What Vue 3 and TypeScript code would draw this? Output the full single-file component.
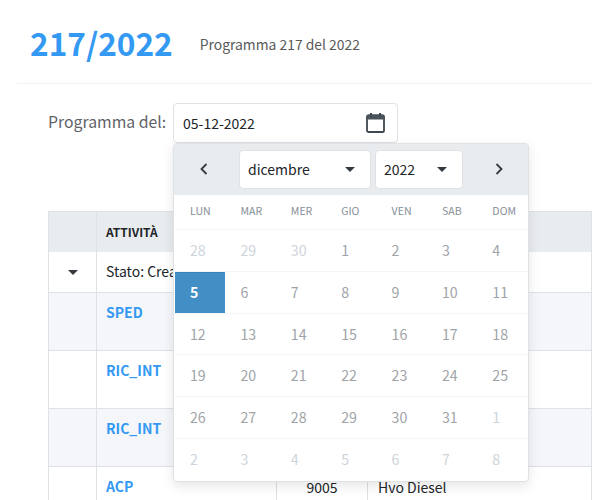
<script setup lang="ts">
interface Day { n: number; out?: boolean; sel?: boolean }
const weekdays: string[] = ['LUN', 'MAR', 'MER', 'GIO', 'VEN', 'SAB', 'DOM']
const first: Day[] = [{ n: 28, out: true }, { n: 29, out: true }, { n: 30, out: true }]
const month: Day[] = Array.from({ length: 31 }, (_, i) => ({ n: i + 1, sel: i === 4 }))
const last: Day[] = [1, 2, 3, 4, 5, 6, 7, 8].map((n) => ({ n, out: true }))
const all: Day[] = [...first, ...month, ...last]
const weeks: Day[][] = Array.from({ length: 6 }, (_, i) => all.slice(i * 7, i * 7 + 7))
const rows = [
  { name: 'SPED', alt: true },
  { name: 'RIC_INT', alt: false },
  { name: 'RIC_INT', alt: true },
  { name: 'ACP', alt: false, code: '9005', desc: 'Hvo Diesel' },
]
</script>

<template>
  <div class="page">
    <header class="head">
      <h1 class="title">217/2022</h1>
      <span class="sub">Programma 217 del 2022</span>
    </header>
    <div class="filter">
      <label class="label">Programma del:</label>
      <div class="picker">
        <div class="input">
          <span>05-12-2022</span>
          <svg class="cal" width="19" height="20" viewBox="0 0 19 20">
            <rect x="1" y="2.5" width="17" height="16.5" rx="1.6" fill="none" stroke="#3f4750" stroke-width="1.8" />
            <path d="M0.5 3a1.5 1.5 0 0 1 1.5-1.5h15A1.5 1.5 0 0 1 18.5 3V6.5H.5z" fill="#4a525b" />
            <rect x="4" y="0" width="2" height="3" fill="#3f4750" />
            <rect x="13" y="0" width="2" height="3" fill="#3f4750" />
          </svg>
        </div>
        <div class="popup">
          <div class="pop-head">
            <svg class="chev prev" width="8" height="12" viewBox="0 0 8 12"><path d="M6.5 1 1.5 6l5 5" fill="none" stroke="#343a40" stroke-width="1.8" /></svg>
            <div class="sel month"><span>dicembre</span><i class="caret"></i></div>
            <div class="sel year"><span>2022</span><i class="caret"></i></div>
            <svg class="chev next" width="8" height="12" viewBox="0 0 8 12"><path d="M1.5 1l5 5-5 5" fill="none" stroke="#343a40" stroke-width="1.8" /></svg>
          </div>
          <div class="week wd">
            <div v-for="d in weekdays" :key="d" class="wd-cell">{{ d }}</div>
          </div>
          <div v-for="(w, i) in weeks" :key="i" class="week days">
            <div
              v-for="d in w"
              :key="d.n + '-' + d.out"
              class="day"
              :class="{ out: d.out, picked: d.sel }"
            >{{ d.n }}</div>
          </div>
        </div>
      </div>
    </div>
    <div class="table">
      <div class="row thead">
        <div class="c c1"></div>
        <div class="c c2"><b>ATTIVITÀ</b></div>
        <div class="c c3"></div>
        <div class="c c4"></div>
      </div>
      <div class="row group">
        <div class="c c1"><i class="caret"></i></div>
        <div class="c grp">Stato: Creato</div>
      </div>
      <div v-for="(r, i) in rows" :key="i" class="row item" :class="{ alt: r.alt }">
        <div class="c c1"></div>
        <div class="c c2"><a class="link">{{ r.name }}</a></div>
        <div class="c c3 num">{{ r.code }}</div>
        <div class="c c4">{{ r.desc }}</div>
      </div>
    </div>
  </div>
</template>

<style scoped>
.page {
  width: 592px;
  height: 500px;
  overflow: hidden;
  background: #fff;
  color: #212529;
  font-family: "Noto Sans CJK SC", "Noto Sans", sans-serif;
  font-size: 14px;
}
.head {
  margin-left: 17px;
  height: 84px;
  box-sizing: border-box;
  padding: 0 0 0 13px;
  border-bottom: 1px solid #f0f1f2;
  display: flex;
  align-items: center;
  gap: 27px;
}
.title {
  margin: 0;
  font-size: 31.6px;
  line-height: 44px;
  font-weight: 700;
  color: #3399f3;
}
.sub {
  font-size: 13.9px;
  line-height: 24px;
  color: #5a5a5a;
  padding-top: 5px;
}
.filter {
  display: flex;
  align-items: flex-start;
  padding: 19px 0 0 48px;
  height: 108px;
}
.label {
  width: 125px;
  font-size: 15.8px;
  line-height: 38px;
  color: #5f6368;
  white-space: nowrap;
}
.picker {
  position: relative;
  width: 225px;
}
.input {
  height: 40px;
  box-sizing: border-box;
  border: 1px solid #dfe1e5;
  border-radius: 4px;
  padding: 0 12px 0 9px;
  display: flex;
  align-items: center;
  justify-content: space-between;
  line-height: 36px;
  background: #fff;
}
.cal { display: block; }
.popup {
  position: absolute;
  z-index: 5;
  top: 40px;
  left: 0;
  width: 356px;
  height: 339px;
  box-sizing: border-box;
  border: 1px solid #dfe1e5;
  border-radius: 4px;
  background: #fff;
  box-shadow: 0 4px 12px rgba(0, 0, 0, 0.1);
  overflow: hidden;
  padding-left: 1px;
}
.pop-head {
  margin-left: -1px;
  height: 51px;
  background: #e9ecef;
  display: flex;
  align-items: center;
  box-sizing: border-box;
}
.chev { flex: none; margin-top: -2px; }
.prev { margin-left: 26px; margin-right: 31px; }
.next { margin-left: 32px; }
.sel {
  height: 39px;
  box-sizing: border-box;
  background: #fff;
  border: 1px solid #dfe1e5;
  border-radius: 4px;
  display: flex;
  align-items: center;
  justify-content: space-between;
  padding: 0 15px 0 8px;
  line-height: 35px;
}
.month { width: 132px; margin-right: 4px; }
.year { width: 88px; }
.caret {
  display: inline-block;
  width: 0;
  height: 0;
  border-left: 5px solid transparent;
  border-right: 5px solid transparent;
  border-top: 5px solid #343a40;
}
.week {
  display: grid;
  grid-template-columns: repeat(7, 50.4px);
}
.wd { height: 35px; align-items: center; border-bottom: 1px solid #f5f5f6; box-sizing: border-box; }
.wd-cell {
  padding-left: 15px;
  font-size: 10.6px;
  line-height: 16px;
  color: #868e96;
  margin-top: -2px;
}
.days {
  height: 41.8px;
  box-sizing: border-box;
  border-bottom: 1px solid #f5f5f6;
}
.days:last-child { border-bottom: 0; }
.day {
  padding-left: 15px;
  line-height: 41px;
  color: #a0a4a8;
  font-size: 14.2px;
}
.day.out { color: #ced4da; }
.day.picked {
  height: 41px;
  background: #428fc6;
  color: #fff;
  font-weight: 700;
  border-top: 1px solid #3a82b6;
  box-sizing: border-box;
  line-height: 39px;
}
.table {
  margin-left: 48px;
  width: 544px;
  box-sizing: border-box;
  border-top: 1px solid #dee2e6;
  border-left: 1px solid #dee2e6;
  border-right: 1px solid #dee2e6;
}
.row {
  display: flex;
  border-bottom: 1px solid #dee2e6;
  box-sizing: border-box;
}
.c { box-sizing: border-box; padding: 9px 10px; line-height: 22px; }
.c + .c { border-left: 1px solid #dee2e6; }
.c1 { width: 47px; padding: 0; display: flex; justify-content: center; }
.c2 { width: 180px; padding-left: 9px; padding-top: 8px; }
.c3 { width: 91px; }
.c4 { flex: 1; }
.grp { flex: 1; padding: 8px 9px; }
.thead { height: 40px; background: #e9ecef; border-bottom: 0; }
.thead b { font-size: 12px; font-weight: 700; color: #212529; }
.group { height: 41px; }
.group .c1 { align-items: center; }
.item { height: 58px; }
.item.alt { background: #f4f6fa; }
.link { color: #3399f3; font-weight: 700; font-size: 14px; }
.num { text-align: center; }
</style>
